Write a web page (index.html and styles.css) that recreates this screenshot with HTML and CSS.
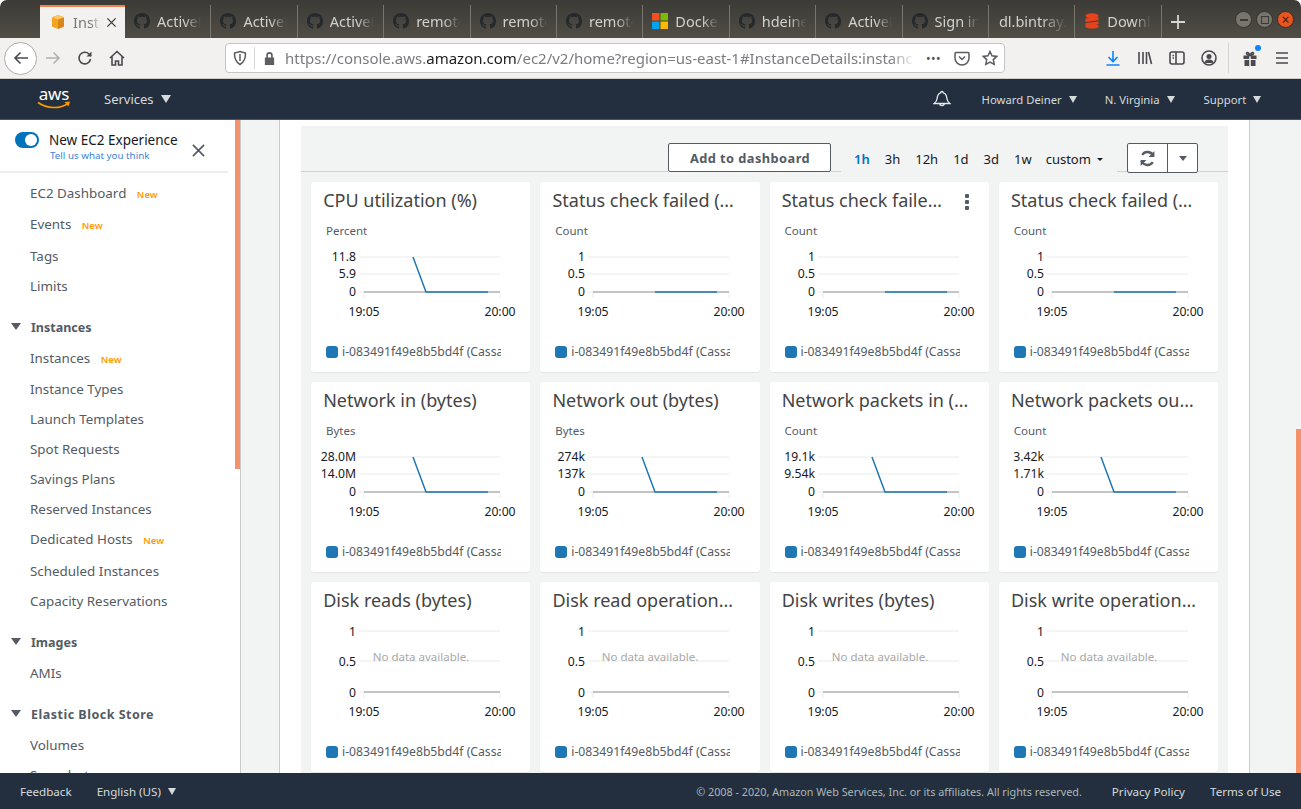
FILE: index.html
```html
<!DOCTYPE html>
<html lang="en">
<head>
	<meta charset="utf-8" />
	<title>Instance details | EC2 Management Console</title>
	<link rel="stylesheet" href="styles.css">
</head>
<body>
<svg class="defs" width="0" height="0">
	<symbol id="gh" viewBox="0 0 16 16"><path d="M8 0C3.58 0 0 3.58 0 8c0 3.54 2.29 6.53 5.47 7.59.4.07.55-.17.55-.38 0-.19-.01-.82-.01-1.49-2.01.37-2.53-.49-2.69-.94-.09-.23-.48-.94-.82-1.13-.28-.15-.68-.52-.01-.53.63-.01 1.08.58 1.23.82.72 1.21 1.87.87 2.33.66.07-.52.28-.87.51-1.07-1.78-.2-3.64-.89-3.64-3.95 0-.87.31-1.59.82-2.15-.08-.2-.36-1.02.08-2.12 0 0 .67-.21 2.2.82.64-.18 1.32-.27 2-.27.68 0 1.36.09 2 .27 1.53-1.04 2.2-.82 2.2-.82.44 1.1.16 1.92.08 2.12.51.56.82 1.27.82 2.15 0 3.07-1.87 3.75-3.65 3.95.29.25.54.73.54 1.48 0 1.07-.01 1.93-.01 2.2 0 .21.15.46.55.38A8.013 8.013 0 0016 8c0-4.42-3.58-8-8-8z"/></symbol>
</svg>

<div class="tabs">
	<div class="tab tab-active">
		<svg class="favicon" viewBox="0 0 16 16"><path d="M8 1l6 2.2v9.4L8 15 2 12.600V3.200z" fill="#f4a41d"/><path d="M8 5.400V15l6-2.400V3.200z" fill="#d9861a"/><path d="M2 3.200L8 1l6 2.200-6 2.200z" fill="#fbc766"/></svg>
		<span class="tab-label">Instan</span>
		<svg class="tab-close" viewBox="0 0 12 12"><path d="M1.500 1.500l9 9M10.500 1.500l-9 9"/></svg>
	</div>
	<div class="tab"><svg class="favicon gh"><use href="#gh"/></svg><span class="tab-label">ActiveM</span></div>
	<div class="tab"><svg class="favicon gh"><use href="#gh"/></svg><span class="tab-label">ActiveM</span></div>
	<div class="tab"><svg class="favicon gh"><use href="#gh"/></svg><span class="tab-label">ActiveM</span></div>
	<div class="tab"><svg class="favicon gh"><use href="#gh"/></svg><span class="tab-label">remote</span></div>
	<div class="tab"><svg class="favicon gh"><use href="#gh"/></svg><span class="tab-label">remote</span></div>
	<div class="tab"><svg class="favicon gh"><use href="#gh"/></svg><span class="tab-label">remote</span></div>
	<div class="tab">
		<svg class="favicon" viewBox="0 0 16 16"><path d="M0 0h7.500v7.500H0z" fill="#f25022"/><path d="M8.500 0H16v7.500H8.500z" fill="#7fba00"/><path d="M0 8.500h7.500V16H0z" fill="#00a4ef"/><path d="M8.500 8.500H16V16H8.500z" fill="#ffb900"/></svg>
		<span class="tab-label">Docker</span>
	</div>
	<div class="tab"><svg class="favicon gh"><use href="#gh"/></svg><span class="tab-label">hdeiner</span></div>
	<div class="tab"><svg class="favicon gh"><use href="#gh"/></svg><span class="tab-label">ActiveM</span></div>
	<div class="tab"><svg class="favicon gh"><use href="#gh"/></svg><span class="tab-label">Sign in</span></div>
	<div class="tab"><span class="tab-label tab-label-wide">dl.bintray.</span></div>
	<div class="tab">
		<svg class="favicon" viewBox="0 0 16 16"><g fill="#e8431a"><ellipse cx="8" cy="2.800" rx="6.500" ry="2.600"/><path d="M1.500 5.500l13-1.200v3L1.500 9zM1.500 10l13-1.500v2.800L1.500 13z"/><ellipse cx="8" cy="13.200" rx="6.500" ry="2.400"/></g></svg>
		<span class="tab-label">Downlo</span>
	</div>
	<svg class="new-tab" viewBox="0 0 14 14"><path d="M7 0v14M0 7h14"/></svg>
	<div class="win-buttons">
		<span class="win-btn"><i class="win-min"></i></span>
		<span class="win-btn"><i class="win-max"></i></span>
		<span class="win-btn win-btn-close">×</span>
	</div>
</div>

<div class="toolbar">
	<span class="back-btn">
		<svg class="tool-icon" viewBox="0 0 16 16"><path d="M15 8H2M7.500 2.500L2 8l5.500 5.500"/></svg>
	</span>
	<svg class="tool-icon tool-forward" viewBox="0 0 16 16"><path d="M1 8h13M8.500 2.500L14 8l-5.500 5.500"/></svg>
	<svg class="tool-icon tool-reload" viewBox="0 0 16 16"><path d="M13.500 9a5.800 5.800 0 1 1-1.600-5L14 6"/><path d="M14.500 1.500V6.500H9.500" class="solid"/></svg>
	<svg class="tool-icon tool-home" viewBox="0 0 16 16"><path d="M1 8l7-6.500L15 8M3 6.500V15h3.500v-4h3v4H13V6.500"/></svg>
	<div class="urlbar">
		<svg class="url-icon" viewBox="0 0 16 16"><path d="M8 1.500l5.500 1.500c.2 5-1.300 9-5.500 11.500C3.800 12 2.300 8 2.500 3z"/><path d="M8 4v7" /></svg>
		<span class="url-sep"></span>
		<svg class="url-lock" viewBox="0 0 14 16"><path d="M3.500 7V4.500a3.500 3.500 0 0 1 7 0V7h1.500v8H2V7zm1.800 0h3.400V4.500a1.700 1.700 0 0 0-3.400 0z"/></svg>
		<span class="url-text">https://console.aws.<b>amazon.com</b>/ec2/v2/home?region=us-east-1#InstanceDetails:instanceId</span>
		<span class="url-dots">•••</span>
		<svg class="url-icon url-pocket" viewBox="0 0 16 16"><path d="M2 2.500h12a1 1 0 0 1 1 1V8a7 7 0 0 1-14 0V3.500a1 1 0 0 1 1-1zM5 6.500l3 3 3-3"/></svg>
		<svg class="url-icon url-star" viewBox="0 0 16 16"><path d="M8 1.500l2 4.300 4.700.6-3.400 3.200.9 4.700L8 12l-4.200 2.300.9-4.700L1.300 6.400 6 5.800z"/></svg>
	</div>
	<svg class="tool-icon tool-download" viewBox="0 0 16 16"><path d="M8 1v10M3.500 7L8 11.500 12.500 7M1.500 15h13"/></svg>
	<svg class="tool-icon tool-library" viewBox="0 0 16 16"><path d="M2 2v12M6 2v12M9.500 2v12M11.500 2l3 12"/></svg>
	<svg class="tool-icon tool-sidebar" viewBox="0 0 16 16"><rect x="1" y="2" width="14" height="12" rx="2"/><path d="M7 2v12M3.500 5.500H5M3.500 8H5"/></svg>
	<svg class="tool-icon tool-profile" viewBox="0 0 16 16"><circle cx="8" cy="8" r="7"/><circle cx="8" cy="6.500" r="2.500" class="filled"/><path d="M3.500 13c.5-3 2.500-3.500 4.500-3.500s4 .5 4.500 3.500z" class="filled"/></svg>
	<span class="tool-sep"></span>
	<span class="gift">
		<svg class="tool-icon" viewBox="0 0 16 16"><path class="filled" d="M1.500 4.500h5.700v3.500H1.500zM8.800 4.500h5.700v3.500H8.800zM2.500 9h4.700v6H2.500zM8.800 9h4.700v6H8.800z"/><path d="M8 4.300C6 4.300 4.500 3.500 4.500 2.300S6.500 1 8 4.300c1.500-3.300 3.500-3.200 3.500-2S10 4.300 8 4.300z"/></svg>
		<i class="gift-dot"></i>
	</span>
	<svg class="tool-icon tool-menu" viewBox="0 0 16 16"><path d="M2 3h12M2 8h12M2 13h12"/></svg>
</div>

<header class="aws-nav">
	<div class="aws-logo">
		<span class="aws-word">aws</span>
		<svg class="aws-smile" viewBox="0 0 34 8"><path d="M1 1.500c9 6.500 22 6.500 30 1" fill="none" stroke="#f90" stroke-width="1.600"/><path d="M27.500 1l5.500-.5-1.500 5z" fill="#f90"/></svg>
	</div>
	<span class="nav-services">Services</span><i class="caret caret-big"></i>
	<svg class="bell" viewBox="0 0 18 18"><path d="M9 1.500c-.8 0-1.300.6-1.300 1.300C5.300 3.500 4.400 5.500 4.200 8c-.2 2.500-1 4-3 5.500h15.600c-2-1.500-2.800-3-3-5.500-.2-2.500-1.100-4.500-3.500-5.200 0-.7-.5-1.300-1.300-1.300zM6.500 13.700a2.600 2.600 0 0 0 5 0"/></svg>
	<span class="nav-link nav-user">Howard Deiner</span><i class="caret"></i>
	<span class="nav-link nav-region">N. Virginia</span><i class="caret"></i>
	<span class="nav-link nav-support">Support</span><i class="caret"></i>
</header>

<div class="main">
	<aside class="sidebar">
		<div class="side-top">
			<span class="toggle"><i class="toggle-knob"></i></span>
			<div class="side-top-text">
				<div class="side-title">New EC2 Experience</div>
				<a class="side-sub">Tell us what you think</a>
			</div>
			<svg class="side-close" viewBox="0 0 14 14"><path d="M1 1l12 12M13 1L1 13"/></svg>
		</div>
		<ul class="side-nav">
			<li class="gap1">EC2 Dashboard <span class="new">New</span></li>
			<li class="gap2">Events <span class="new">New</span></li>
			<li>Tags</li>
			<li>Limits</li>
			<li class="side-head"><i class="caret caret-side"></i>Instances</li>
			<li class="gap1">Instances <span class="new">New</span></li>
			<li>Instance Types</li>
			<li>Launch Templates</li>
			<li>Spot Requests</li>
			<li>Savings Plans</li>
			<li>Reserved Instances</li>
			<li class="gap2">Dedicated Hosts <span class="new">New</span></li>
			<li>Scheduled Instances</li>
			<li>Capacity Reservations</li>
			<li class="side-head"><i class="caret caret-side"></i>Images</li>
			<li>AMIs</li>
			<li class="side-head side-head-wide"><i class="caret caret-side"></i>Elastic Block Store</li>
			<li>Volumes</li>
			<li>Snapshots</li>
		</ul>
		<div class="scroll-thumb side-thumb"></div>
	</aside>
	<div class="gutter"></div>
	<main class="content">
		<section class="panel">
			<div class="panel-tools">
				<span class="rule rule-left"></span>
				<button class="add-btn">Add to dashboard</button>
				<span class="rule rule-short"></span>
				<div class="ranges">
					<span class="range range-on">1h</span>
					<span class="range">3h</span>
					<span class="range">12h</span>
					<span class="range">1d</span>
					<span class="range">3d</span>
					<span class="range">1w</span>
					<span class="range range-custom">custom<i class="caret-tiny"></i></span>
				</div>
				<span class="rule rule-mid"></span>
				<div class="refresh">
					<span class="refresh-main">
						<svg viewBox="0 0 16 16"><path d="M13.500 5.500A6 6 0 0 0 3 4.500M2.500 10.500A6 6 0 0 0 13 11.500"/><path class="solid" d="M14.500 1v5.500H9zM1.500 15V9.500H7z"/></svg>
					</span>
					<span class="refresh-more"><i class="caret-small"></i></span>
				</div>
				<span class="rule rule-right"></span>
			</div>
			<div class="cards" id="cards"></div>
		</section>
	</main>
	<div class="gutter gutter-right"><div class="scroll-thumb page-thumb"></div></div>
</div>

<footer class="aws-foot">
	<span class="foot-link foot-feedback">Feedback</span>
	<span class="foot-link foot-lang">English (US)</span><i class="caret"></i>
	<span class="foot-copy">© 2008 - 2020, Amazon Web Services, Inc. or its affiliates. All rights reserved.</span>
	<span class="foot-link foot-privacy">Privacy Policy</span>
	<span class="foot-link foot-terms">Terms of Use</span>
</footer>

<script>
// one entry per widget: title, unit, y labels, spike, menu. no unit means no data
const widgets = [
	["CPU utilization (%)", "Percent", ["11.8", "5.9"], true],
	["Status check failed (any)", "Count", ["1", "0.5"], false],
	["Status check failed (instance)", "Count", ["1", "0.5"], false, true],
	["Status check failed (system)", "Count", ["1", "0.5"], false],
	["Network in (bytes)", "Bytes", ["28.0M", "14.0M"], true],
	["Network out (bytes)", "Bytes", ["274k", "137k"], true],
	["Network packets in (count)", "Count", ["19.1k", "9.54k"], true],
	["Network packets out (count)", "Count", ["3.42k", "1.71k"], true],
	["Disk reads (bytes)"],
	["Disk read operations (count)"],
	["Disk writes (bytes)"],
	["Disk write operations (count)"]
];

function chart(labels, spike) {
	const hasData = !!labels;
	const top = hasData ? 17 : 9;
	const mid = hasData ? 34 : 39;
	const base = hasData ? 52 : 70;
	const dy = hasData ? 4 : 5;
	const names = labels || ["1", "0.5"];
	let line = "";
	if (hasData) {
		const pts = spike ? `102,${top} 115,${base} 177,${base}` : `115,${base} 177,${base}`;
		line = `<polyline class="series" points="${pts}"/>`;
	} else {
		line = `<text class="no-data" x="110" y="${mid}" text-anchor="middle">No data available.</text>`;
	}
	return `<svg class="plot" width="219" height="${base + 38}">
		<path class="grid" d="M48 ${top}H189M48 ${mid}H189M48 ${base}H53M53 ${base}v6M189 ${base}v6"/>
		<path class="axis" d="M53 ${base}H189"/>
		<text class="y-label" x="45" y="${top + dy}">${names[0]}</text>
		<text class="y-label" x="45" y="${mid + dy}">${names[1]}</text>
		<text class="y-label" x="45" y="${base + dy}">0</text>
		<text class="x-label" x="53" y="${base + 24}">19:05</text>
		<text class="x-label" x="189" y="${base + 24}">20:00</text>
		${line}
	</svg>`;
}

const container = document.querySelector("#cards");
for (const w of widgets) {
	const card = document.createElement("div");
	card.className = "card";
	card.innerHTML = `
		<div class="card-head">
			<h3 class="card-title">${w[0]}</h3>
			${w[4] ? '<span class="card-menu"><i></i><i></i><i></i></span>' : ""}
		</div>
		${w[1] ? `<div class="card-unit">${w[1]}</div>` : ""}
		${chart(w[2], w[3])}
		<div class="legend"><i class="swatch"></i><span class="legend-text">i-083491f49e8b5bd4f (Cassandra)</span></div>`;
	container.appendChild(card);
}
</script>
</body>
</html>
```

FILE: styles.css
```css
* {
	box-sizing: border-box;
}

html, body {
	margin: 0;
	height: 809px;
	overflow: hidden;
}

body {
	display: flex;
	flex-direction: column;
	font-family: "Noto Sans", "Open Sans", sans-serif;
	color: #545b64;
	background: #fff;
}

.defs {
	position: absolute;
}

i {
	display: block;
}

/* browser tabs */
.tabs {
	height: 38px;
	flex: none;
	display: flex;
	align-items: flex-end;
	padding-left: 40px;
	background: linear-gradient(#3b3a36, #504d45);
	border-radius: 7px 7px 0 0;
}

.tab {
	width: 86.4px;
	height: 33px;
	flex: none;
	display: flex;
	align-items: center;
	padding: 0 7px 1px 9px;
	color: #d3d1cc;
	font-size: 14.5px;
	border-right: 1px solid #77756d;
}

.tab-active {
	width: 85px;
	padding-left: 10px;
	background: #f2f1ef;
	color: #77767a;
	border-right: 0;
	border-top: 2px solid #f0814d;
}

.favicon {
	width: 16px;
	height: 16px;
	flex: none;
	margin-right: 7px;
}

.gh {
	fill: #24292e;
}

.tab-label {
	width: 44px;
	overflow: hidden;
	white-space: nowrap;
	-webkit-mask-image: linear-gradient(90deg, #000 62%, transparent);
	mask-image: linear-gradient(90deg, #000 62%, transparent);
}

.tab-active .tab-label {
	width: 28px;
}

.tab-label-wide {
	width: 68px;
	margin-left: 1px;
}

.tab-close {
	width: 11px;
	height: 11px;
	margin-left: 5px;
	fill: none;
	stroke: #3b3a36;
	stroke-width: 1.4;
}

.new-tab {
	width: 14px;
	height: 14px;
	margin: 0 0 9px 9px;
	fill: none;
	stroke: #d8d6d1;
	stroke-width: 1.800;
}

.win-buttons {
	display: flex;
	gap: 4px;
	margin: 0 7px 10px auto;
}

.win-btn {
	width: 17px;
	height: 17px;
	border-radius: 50%;
	background: #77756c;
	border: 1px solid #34332f;
	display: flex;
	align-items: center;
	justify-content: center;
}

.win-min {
	width: 8px;
	height: 2px;
	background: #3a3935;
}

.win-max {
	width: 8px;
	height: 8px;
	border: 1px solid #3a3935;
}

.win-btn-close {
	background: #e9541f;
	color: #43210f;
	font-size: 14px;
	line-height: 1;
}

/* browser toolbar */
.toolbar {
	height: 41px;
	flex: none;
	display: flex;
	align-items: center;
	background: #f2f1ef;
	border-bottom: 1px solid #cfcdc9;
	padding-left: 4px;
}

.tool-icon {
	width: 16px;
	height: 16px;
	flex: none;
	fill: none;
	stroke: #4a4a4f;
	stroke-width: 1.600;
}

.tool-icon .filled {
	fill: #4a4a4f;
	stroke: none;
}

.tool-icon .solid {
	fill: #4a4a4f;
	stroke: none;
}

.back-btn {
	width: 33px;
	height: 33px;
	flex: none;
	border-radius: 50%;
	background: #fff;
	border: 1px solid #aeaca8;
	display: flex;
	align-items: center;
	justify-content: center;
}

.tool-forward {
	margin-left: 8px;
	stroke: #b1b1b3;
}

.tool-reload {
	margin-left: 16px;
}

.tool-home {
	margin-left: 16px;
}

.urlbar {
	width: 780px;
	height: 30px;
	margin: 0 0 0 100px;
	flex: none;
	display: flex;
	align-items: center;
	background: #fff;
	border: 1px solid #c6c5c2;
	border-radius: 4px;
	padding-left: 6px;
}

.url-icon {
	width: 16px;
	height: 16px;
	flex: none;
	fill: none;
	stroke: #5b5b60;
	stroke-width: 1.500;
}

.url-sep {
	width: 1px;
	height: 22px;
	margin: 0 8px 0 6px;
	background: #d8d7d4;
}

.url-lock {
	width: 13px;
	height: 15px;
	flex: none;
	fill: #5f5f63;
}

.url-text {
	width: 630px;
	margin-left: 9px;
	flex: none;
	overflow: hidden;
	white-space: nowrap;
	font-size: 15px;
	color: #7c7c80;
	-webkit-mask-image: linear-gradient(90deg, #000 96%, transparent);
	mask-image: linear-gradient(90deg, #000 96%, transparent);
}

.url-text b {
	font-weight: 400;
	color: #1c1c1f;
}

.url-dots {
	margin-left: 11px;
	font-size: 12px;
	letter-spacing: 0.5px;
	color: #55555a;
}

.url-pocket {
	margin-left: 13px;
}

.url-star {
	margin-left: 12px;
}

.tool-download {
	margin-left: 100px;
	stroke: #0a84ff;
}

.tool-library,
.tool-sidebar,
.tool-profile {
	margin-left: 16px;
}

.tool-sep {
	width: 1px;
	height: 30px;
	margin: 0 13px 0 11px;
	background: #d5d3cf;
}

.gift {
	position: relative;
	height: 16px;
}

.gift-dot {
	position: absolute;
	top: -5px;
	right: -3px;
	width: 6px;
	height: 6px;
	border-radius: 50%;
	background: #0a84ff;
}

.tool-menu {
	margin-left: 16px;
}

/* aws header */
.aws-nav {
	height: 41px;
	flex: none;
	display: flex;
	align-items: center;
	background: #232f3e;
	border-bottom: 1px solid #4a5460;
	padding-left: 37px;
	color: #d5dbdb;
}

.aws-logo {
	width: 34px;
	height: 24px;
	display: flex;
	flex-direction: column;
	align-items: center;
	margin-top: -2px;
}

.aws-word {
	color: #fff;
	font-size: 17px;
	line-height: 15px;
	letter-spacing: -0.2px;
}

.aws-smile {
	width: 34px;
	height: 8px;
	flex: none;
}

.nav-services {
	margin-left: 33px;
	font-size: 13px;
}

.caret {
	width: 0;
	height: 0;
	margin-left: 7px;
	border-left: 4.500px solid transparent;
	border-right: 4.500px solid transparent;
	border-top: 7px solid #d5dbdb;
}

.caret-big {
	margin-left: 7px;
	border-left-width: 5.500px;
	border-right-width: 5.500px;
	border-top-width: 8px;
}

.bell {
	width: 18px;
	height: 18px;
	margin-left: 762px;
	fill: none;
	stroke: #e6e9ea;
	stroke-width: 1.300;
}

.nav-link {
	font-size: 11.300px;
}

.nav-user {
	margin-left: 31px;
}

.nav-region {
	margin-left: 28px;
}

.nav-support {
	margin-left: 29px;
}

/* page */
.main {
	flex: 1;
	min-height: 0;
	display: flex;
	overflow: hidden;
}

.sidebar {
	width: 241px;
	flex: none;
	position: relative;
	background: #fff;
	border-right: 1px solid #c8cccc;
	overflow: hidden;
}

.scroll-thumb {
	position: absolute;
	right: 0;
	width: 5px;
	background: #f4936b;
}

.side-thumb {
	top: 0;
	height: 349px;
}

.side-top {
	position: relative;
	height: 53px;
	width: 228px;
	display: flex;
	padding: 12px 0 0 15px;
	border-bottom: 2px solid #eaeded;
}

.toggle {
	width: 24px;
	height: 16px;
	flex: none;
	border-radius: 8px;
	background: #0073bb;
	padding: 2px 2px 2px 10px;
}

.toggle-knob {
	width: 12px;
	height: 12px;
	border-radius: 50%;
	background: #fff;
}

.side-top-text {
	margin-left: 10px;
}

.side-title {
	font-size: 13.500px;
	line-height: 16px;
	color: #16191f;
}

.side-sub {
	display: block;
	margin: 1px 0 0 1px;
	font-size: 9.800px;
	line-height: 14px;
	color: #3b85d6;
}

.side-close {
	position: absolute;
	left: 192px;
	top: 24px;
	width: 13px;
	height: 13px;
	fill: none;
	stroke: #545b64;
	stroke-width: 1.800;
}

.side-nav {
	list-style: none;
	margin: 0;
	padding: 5px 0 0 30px;
	font-size: 13.400px;
	line-height: 30px;
}

.side-nav li {
	height: 30px;
	white-space: nowrap;
}

.side-nav .gap1 {
	margin-bottom: 1px;
}

.side-nav .gap2 {
	margin-bottom: 2px;
}

.side-nav .side-head {
	position: relative;
	margin-top: 11px;
	margin-bottom: 1px;
	padding: 1px 0 0 1px;
	font-weight: 700;
	font-size: 12.500px;
}

.side-nav .side-head-wide {
	letter-spacing: 0.5px;
}

.caret-side {
	position: absolute;
	left: -19px;
	top: 11px;
	margin: 0;
	border-left-width: 5px;
	border-right-width: 5px;
	border-top-color: #545b64;
}

.new {
	margin-left: 7px;
	font-size: 9.500px;
	font-weight: 600;
	color: #ff9900;
}

.gutter {
	width: 39px;
	flex: none;
	background: #f2f3f3;
	border-right: 1px solid #c8cccc;
}

.gutter-right {
	position: relative;
	width: 52px;
	border-right: 0;
	border-left: 1px solid #c8cccc;
}

.page-thumb {
	top: 309px;
	bottom: 0;
}

.content {
	flex: 1;
	min-width: 0;
	padding: 6px 21px 0;
	background: #fff;
}

.panel {
	background: #f2f3f3;
	height: 100%;
	padding-bottom: 1px;
}

.panel-tools {
	display: flex;
	height: 46px;
	align-items: flex-start;
}

.rule {
	height: 46px;
	border-bottom: 1px solid #cfd2d2;
}

.rule-left {
	width: 367px;
}

.rule-short {
	width: 10px;
}

.rule-mid {
	width: 10px;
}

.rule-right {
	flex: 1;
}

.add-btn {
	width: 163px;
	height: 29px;
	margin-top: 17px;
	padding: 0 0 0 1px;
	background: #fff;
	border: 1px solid #545b64;
	border-radius: 2px;
	font: 700 12.800px "Noto Sans", sans-serif;
	letter-spacing: 0.45px;
	line-height: 29px;
	color: #545b64;
}

.ranges {
	width: 276px;
	margin-top: 24px;
	padding-left: 13px;
	display: flex;
	font-size: 13px;
	line-height: 18px;
	color: #16191f;
}

.range {
	margin-right: 15px;
}

.range-on {
	color: #0073bb;
	font-weight: 600;
}

.range-custom {
	margin: 0 0 0 -1px;
	display: flex;
	align-items: center;
}

.caret-tiny {
	margin-left: 6px;
	border-left: 3px solid transparent;
	border-right: 3px solid transparent;
	border-top: 3px solid #16191f;
}

.refresh {
	width: 71px;
	height: 30px;
	margin-top: 17px;
	display: flex;
	background: #fff;
	border: 1px solid #545b64;
	border-radius: 2px;
}

.refresh-main {
	width: 40px;
	display: flex;
	align-items: center;
	justify-content: center;
	border-right: 1px solid #545b64;
}

.refresh-main svg {
	width: 17px;
	height: 17px;
	fill: none;
	stroke: #545b64;
	stroke-width: 2.200;
}

.refresh-main .solid {
	fill: #545b64;
	stroke: none;
}

.refresh-more {
	flex: 1;
	display: flex;
	align-items: center;
	justify-content: center;
}

.caret-small {
	border-left: 4px solid transparent;
	border-right: 4px solid transparent;
	border-top: 5px solid #545b64;
}

.cards {
	display: grid;
	grid-template-columns: repeat(4, 1fr);
	grid-auto-rows: 190px;
	gap: 10px;
	padding: 10px 10px 0;
}

.card {
	background: #fff;
	border-radius: 3px;
	overflow: hidden;
	box-shadow: 0 1px 1px rgba(0, 28, 36, 0.06);
}

.card-head {
	height: 40px;
	display: flex;
	align-items: flex-start;
	padding: 6px 20px 0 12.200px;
}

.card-title {
	flex: 1;
	min-width: 0;
	margin: 0;
	font-size: 18px;
	line-height: 25px;
	font-weight: 400;
	color: #444;
	white-space: nowrap;
	overflow: hidden;
	text-overflow: ellipsis;
}

.card-menu {
	width: 4px;
	margin: 6px 0 0 21px;
	display: flex;
	flex-direction: column;
	gap: 2px;
}

.card-menu i {
	width: 4px;
	height: 4px;
	border-radius: 1px;
	background: #545b64;
}

.card-unit {
	height: 18px;
	padding-left: 15px;
	font-size: 11.500px;
	line-height: 18px;
}

.plot {
	display: block;
}

.grid {
	fill: none;
	stroke: #e8eaea;
	stroke-width: 1;
}

.axis {
	fill: none;
	stroke: #c4c4c4;
	stroke-width: 2;
}

.series {
	fill: none;
	stroke: #1f77b4;
	stroke-width: 1.500;
}

.y-label {
	font-size: 12.200px;
	text-anchor: end;
	fill: #16191f;
}

.x-label {
	font-size: 12.200px;
	text-anchor: middle;
	fill: #16191f;
}

.no-data {
	font-size: 11.500px;
	fill: #a8a8a8;
}

.legend {
	display: flex;
	align-items: center;
	margin-top: 14px;
	padding-left: 15px;
}

.swatch {
	width: 12px;
	height: 12px;
	flex: none;
	border-radius: 3px;
	background: #1f77b4;
}

.legend-text {
	width: 159px;
	margin-left: 4px;
	overflow: hidden;
	white-space: nowrap;
	font-size: 12.200px;
	line-height: 16px;
}

/* aws footer */
.aws-foot {
	height: 36px;
	flex: none;
	display: flex;
	align-items: center;
	background: #232f3e;
	color: #d5dbdb;
	font-size: 11.600px;
	position: relative;
}

.foot-feedback {
	margin-left: 20px;
}

.foot-lang {
	margin-left: 25px;
}

.foot-copy {
	margin-left: auto;
	color: #aab7b8;
	font-size: 10.800px;
}

.foot-privacy {
	margin-left: 30px;
}

.foot-terms {
	margin: 0 20px 0 25px;
}
```
